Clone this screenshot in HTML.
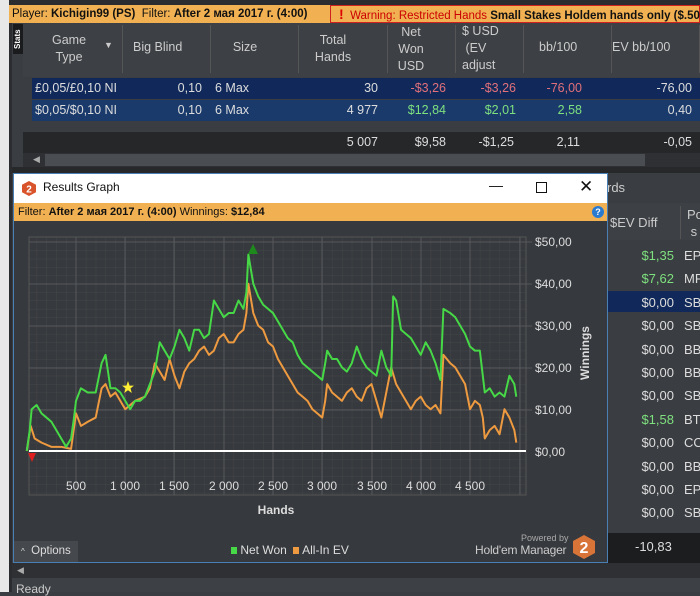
<!DOCTYPE html>
<html><head><meta charset="utf-8"><style>
*{margin:0;padding:0;box-sizing:border-box}
body{width:700px;height:592px;overflow:hidden;background:#3a3d41;font-family:"Liberation Sans",sans-serif;font-size:12px;color:#ddd;position:relative}
.a{position:absolute;white-space:nowrap}
.r{text-align:right}
.g{color:#7ee07e}.rd{color:#e2707a}
.dv{position:absolute;top:25px;width:1px;height:48px;background:#555}
</style></head><body>
<div class="a" style="left:0;top:0;width:700px;height:5px;background:#2a2c2f"></div>
<div class="a" style="left:0;top:0;width:9px;height:592px;background:#e8e8e8"></div>
<div class="a" style="left:9px;top:0;width:3px;height:592px;background:#2a2c2f"></div>
<div class="a" style="left:9px;top:5px;width:321px;height:18px;background:#f1b153;color:#111;font-size:11.5px;line-height:18px;padding-left:3px">Player: <b>Kichigin99 (PS)</b>&nbsp; Filter: <b>After 2 мая 2017 г. (4:00)</b></div>
<div class="a" style="left:330px;top:5px;width:370px;height:18px;background:#f1b153;border:1px solid #d02020;color:#111;font-size:11.5px;line-height:16px;padding-left:8px"><span style="color:#d00;font-weight:bold;font-size:14px">!</span>&nbsp; <span style="color:#c00">Warning: Restricted Hands</span> <b>Small Stakes Holdem hands only ($.50 NL, $</b></div>
<div class="a" style="left:13px;top:24px;width:10px;height:30px;background:#1a1b1d;color:#fff;font-size:8px;writing-mode:vertical-rl;transform:rotate(180deg);font-weight:bold;text-align:center">Stats</div>
<div class="a" style="left:23px;top:23px;width:677px;height:54px;background:#3d4044"></div>
<div class="a" style="left:0;top:23px;width:700px;height:54px;color:#ccc;font-size:12.5px">
<div class="a" style="left:69px;top:9px;transform:translateX(-50%);text-align:center;line-height:17px">Game<br>Type</div>
<div class="a" style="left:104px;top:17px;font-size:9px">▼</div>
<div class="a" style="left:133px;top:17px">Big Blind</div>
<div class="a" style="left:245px;top:17px;transform:translateX(-50%)">Size</div>
<div class="a" style="left:333px;top:9px;transform:translateX(-50%);text-align:center;line-height:17px">Total<br>Hands</div>
<div class="a" style="left:411px;top:1px;transform:translateX(-50%);text-align:center;line-height:17px">Net<br>Won<br>USD</div>
<div class="a" style="left:462px;top:0px;line-height:17px">$ USD<br>&nbsp;(EV<br>adjust</div>
<div class="a" style="left:539px;top:17px">bb/100</div>
<div class="a" style="left:612px;top:17px">EV bb/100</div>
</div>
<div class="dv" style="left:122px"></div><div class="dv" style="left:210px"></div><div class="dv" style="left:298px"></div><div class="dv" style="left:387px"></div><div class="dv" style="left:455px"></div><div class="dv" style="left:523px"></div><div class="dv" style="left:611px"></div><div class="dv" style="left:699px"></div>
<div class="a" style="left:32px;top:78px;width:668px;height:21px;background:#10295a;font-size:12.5px;line-height:21px">
<span class="a" style="left:3px">£0,05/£0,10 NI</span><span class="a r" style="right:498px">0,10</span><span class="a" style="left:183px">6 Max</span><span class="a r" style="right:322px">30</span><span class="a r rd" style="right:254px">-$3,26</span><span class="a r rd" style="right:184px">-$3,26</span><span class="a r rd" style="right:118px">-76,00</span><span class="a r" style="right:8px">-76,00</span></div>
<div class="a" style="left:32px;top:100px;width:668px;height:21px;background:#1a3a6c;font-size:12.5px;line-height:21px">
<span class="a" style="left:3px">$0,05/$0,10 NI</span><span class="a r" style="right:498px">0,10</span><span class="a" style="left:183px">6 Max</span><span class="a r" style="right:322px">4 977</span><span class="a r g" style="right:254px">$12,84</span><span class="a r g" style="right:184px">$2,01</span><span class="a r g" style="right:118px">2,58</span><span class="a r" style="right:8px">0,40</span></div>
<div class="a" style="left:23px;top:132px;width:677px;height:21px;background:#262729;font-size:12.5px;line-height:21px">
<span class="a r" style="right:322px">5 007</span><span class="a r" style="right:254px">$9,58</span><span class="a r" style="right:186px">-$1,25</span><span class="a r" style="right:120px">2,11</span><span class="a r" style="right:8px">-0,05</span></div>
<div class="a" style="left:23px;top:153px;width:677px;height:14px;background:#2e3033"></div>
<div class="a" style="left:45px;top:154px;width:600px;height:12px;background:#4a4d51"></div>
<div class="a" style="left:33px;top:154px;font-size:9px;color:#aaa">◀</div>
<div class="a" style="left:12px;top:167px;width:688px;height:6px;background:#26282a"></div>
<div class="a" style="left:607px;top:173px;width:93px;height:30px;background:#3a3d41;color:#ccc;font-size:13px;line-height:30px">rds</div>
<div class="a" style="left:607px;top:203px;width:93px;height:37px;background:#3d4044;color:#ccc;font-size:13px">
<span class="a" style="left:3px;top:12px">$EV Diff</span><div class="a" style="left:73px;top:3px;width:1px;height:33px;background:#555"></div><span class="a" style="left:80px;top:3px;line-height:17px">Po<br>&nbsp;s</span></div>
<div class="a" style="left:607px;top:291px;width:93px;height:21px;background:#10295a"></div>
<div class="a" style="left:607px;top:533px;width:93px;height:30px;background:#1c1d1f"></div>
<div class="a" style="left:607px;top:244px;width:93px;font-size:13px;line-height:23.4px">
<div style="position:relative;height:23.4px"><span class="a r g" style="right:26px">$1,35</span><span class="a" style="left:77px">EP</span></div>
<div style="position:relative;height:23.4px"><span class="a r g" style="right:26px">$7,62</span><span class="a" style="left:77px">MP</span></div>
<div style="position:relative;height:23.4px"><span class="a r" style="right:26px">$0,00</span><span class="a" style="left:77px">SB</span></div>
<div style="position:relative;height:23.4px"><span class="a r" style="right:26px">$0,00</span><span class="a" style="left:77px">SB</span></div>
<div style="position:relative;height:23.4px"><span class="a r" style="right:26px">$0,00</span><span class="a" style="left:77px">BB</span></div>
<div style="position:relative;height:23.4px"><span class="a r" style="right:26px">$0,00</span><span class="a" style="left:77px">BB</span></div>
<div style="position:relative;height:23.4px"><span class="a r" style="right:26px">$0,00</span><span class="a" style="left:77px">SB</span></div>
<div style="position:relative;height:23.4px"><span class="a r g" style="right:26px">$1,58</span><span class="a" style="left:77px">BT</span></div>
<div style="position:relative;height:23.4px"><span class="a r" style="right:26px">$0,00</span><span class="a" style="left:77px">CO</span></div>
<div style="position:relative;height:23.4px"><span class="a r" style="right:26px">$0,00</span><span class="a" style="left:77px">BB</span></div>
<div style="position:relative;height:23.4px"><span class="a r" style="right:26px">$0,00</span><span class="a" style="left:77px">EP</span></div>
<div style="position:relative;height:23.4px"><span class="a r" style="right:26px">$0,00</span><span class="a" style="left:77px">SB</span></div>
</div>
<div class="a" style="left:635px;top:539px;font-size:13px">-10,83</div>
<div class="a" style="left:12px;top:563px;width:688px;height:15px;background:#2e3033"></div>
<div class="a" style="left:17px;top:565px;font-size:9px;color:#aaa">◀</div>
<div class="a" style="left:12px;top:578px;width:688px;height:14px;background:#3d4044;color:#ccc;font-size:12px;padding:4px 0 0 4px">Ready</div>
<div class="a" style="left:13px;top:173px;width:595px;height:390px;border:1px solid #4a7fb5;background:#36393d">
<div class="a" style="left:0;top:0;width:593px;height:29px;background:#fff;color:#111;font-size:12px;line-height:27px">
<svg class="a" style="left:8px;top:7px" width="14" height="15" viewBox="0 0 14 15"><polygon points="7,0 14,3.7 14,11.3 7,15 0,11.3 0,3.7" fill="#d9532b"/><text x="7" y="11.5" font-size="10" font-weight="bold" fill="#fff" text-anchor="middle" font-family="Liberation Sans">2</text></svg>
<span class="a" style="left:29px">Results Graph</span>
<span class="a" style="left:475px;top:-2px;font-size:14px">—</span>
<div class="a" style="left:522px;top:8px;width:11px;height:11px;border:1px solid #111"></div>
<span class="a" style="left:565px;top:-1px;font-size:17px;font-weight:lighter">✕</span>
</div>
<div class="a" style="left:0;top:29px;width:593px;height:18px;background:#f1b153;color:#111;font-size:11px;line-height:18px;padding-left:4px">Filter: <b>After 2 мая 2017 г. (4:00)</b> Winnings: <b>$12,84</b>
<div class="a" style="left:578px;top:3px;width:12px;height:12px;border-radius:6px;background:#2a7bd0;color:#fff;font-size:9px;line-height:12px;text-align:center;font-weight:bold">?</div></div>
<svg class="a" style="left:0;top:47px" width="593" height="341" viewBox="14 220 593 341">
<defs><pattern id="mn" x="26.75" y="241" width="9.85" height="8.36" patternUnits="userSpaceOnUse"><path d="M0 0H9.85M0 0V8.36" stroke="#444649" stroke-width="1" fill="none"/></pattern></defs>
<rect x="29" y="236" width="497" height="258" fill="url(#mn)"/>
<rect x="29" y="236" width="497" height="258" fill="none" stroke="#555" stroke-width="1"/>
<g stroke="#55585c" stroke-width="1">
<path d="M76 236V494M125 236V494M174 236V494M224 236V494M273 236V494M322 236V494M372 236V494M421 236V494M470 236V494M520 236V494"/>
<path d="M29 241H532M29 283H532M29 325H532M29 367H532M29 409H532"/>
</g>
<g transform="translate(26.75,450) scale(0.0985,-4.18)" fill="none" stroke-width="2" stroke-linejoin="round">
<polyline vector-effect="non-scaling-stroke" stroke="#ee9a40" points="0,0 40,6 80,3 150,2 250,1 350,1 450,0.5 500,9 550,6 620,7 700,8 760,15 800,16 850,13 900,14 1000,10 1100,12 1200,13 1250,15 1300,21 1350,19 1400,17 1450,22 1500,18 1550,15 1600,19 1650,21 1700,22 1750,24 1800,25 1850,23 1900,24 1950,27 2000,28 2050,26 2100,26 2150,28 2200,29 2230,33 2250,40 2300,33 2350,30 2400,29 2450,26 2500,25 2550,22 2600,20 2650,18 2700,16 2750,14 2800,13 2850,12 2900,10 2950,9 3000,8 3030,12 3050,16 3100,14 3200,12 3250,14 3300,15 3350,13 3400,12 3450,15 3500,16 3550,12 3600,8 3650,14 3700,20 3750,16 3800,14 3850,12 3900,10 3950,12 4000,13 4050,11 4100,10 4150,11 4200,9 4230,23 4300,21 4350,20 4400,18 4450,16 4500,10 4550,12 4600,11 4630,8 4650,3 4700,5 4750,6 4800,4 4850,10 4900,8 4950,5 4970,2"/>
<polyline vector-effect="non-scaling-stroke" stroke="#46d846" points="0,0 30,5 50,10 100,11 150,9 200,8 250,7 300,5 350,3 400,1 450,3 480,8 500,12 550,15 620,14 700,14 760,21 800,23 850,15 900,15 950,14 1000,12 1050,10 1100,12 1150,12 1200,13 1250,16 1300,19 1350,26 1400,24 1450,22 1500,25 1550,29 1600,27 1650,24 1700,29 1750,29 1800,27 1850,28 1900,36 1950,34 2000,32 2050,33 2100,33 2150,36 2200,34 2230,38 2250,47 2300,40 2350,37 2400,35 2450,34 2500,33 2550,31 2600,29 2650,27 2700,26 2750,23 2800,21 2850,20 2900,19 2950,18 3000,17 3030,21 3050,24 3100,22 3150,22 3200,20 3250,19 3300,21 3350,25 3400,22 3450,20 3500,19 3550,18 3600,24 3650,20 3700,18 3720,37 3750,36 3800,29 3850,28 3900,27 3950,25 4000,23 4050,26 4100,24 4150,21 4200,17 4230,34 4300,33 4350,32 4400,30 4450,28 4500,25 4550,24 4600,24 4650,14 4700,15 4750,13 4800,14 4850,13 4900,18 4950,16 4970,13"/>
</g>
<line x1="29" y1="450" x2="526" y2="450" stroke="#fff" stroke-width="2"/>
<polygon points="28,452 36,452 32,461" fill="#e02020"/>
<polygon points="248,253 258,253 253,243" fill="#1e8a1e"/>
<polygon points="128,380 129.6,384.6 134,384.6 130.5,387.4 131.8,392 128,389.2 124.2,392 125.5,387.4 122,384.6 126.4,384.6" fill="#ffee33"/>
<g fill="#ddd" font-size="12" font-family="Liberation Sans">
<text x="535" y="245">$50,00</text><text x="535" y="287">$40,00</text><text x="535" y="329">$30,00</text><text x="535" y="371">$20,00</text><text x="535" y="413">$10,00</text><text x="535" y="455">$0,00</text>
<g text-anchor="middle"><text x="76" y="489">500</text><text x="125" y="489">1 000</text><text x="174" y="489">1 500</text><text x="224" y="489">2 000</text><text x="273" y="489">2 500</text><text x="322" y="489">3 000</text><text x="372" y="489">3 500</text><text x="421" y="489">4 000</text><text x="470" y="489">4 500</text>
<text x="276" y="513" font-weight="bold">Hands</text></g>
<text transform="translate(589,352) rotate(-90)" text-anchor="middle" font-weight="bold">Winnings</text>
</g>
</svg>
<div class="a" style="left:0;top:367px;width:64px;height:21px;background:#45484c;color:#ddd;font-size:11.5px;line-height:21px;padding-left:7px"><span style="font-size:8px">^</span>&nbsp; Options</div>
<div class="a" style="left:217px;top:369px;font-size:12px;color:#ddd"><span style="display:inline-block;width:6px;height:7px;background:#46d846"></span> Net Won &nbsp;<span style="display:inline-block;width:6px;height:7px;background:#ee9a40"></span> All-In EV</div>
<div class="a" style="left:507px;top:359px;font-size:9px;color:#aaa">Powered by</div>
<div class="a" style="left:461px;top:369px;font-size:12px;color:#ccc;letter-spacing:-0.2px">Hold'em Manager</div>
<svg class="a" style="left:559px;top:361px" width="22" height="24" viewBox="0 0 22 24"><polygon points="11,0 22,6 22,18 11,24 0,18 0,6" fill="#d97438"/><text x="11" y="18" font-size="16" font-weight="bold" fill="#fff" text-anchor="middle" font-family="Liberation Sans">2</text></svg>
</div>
</body></html>
